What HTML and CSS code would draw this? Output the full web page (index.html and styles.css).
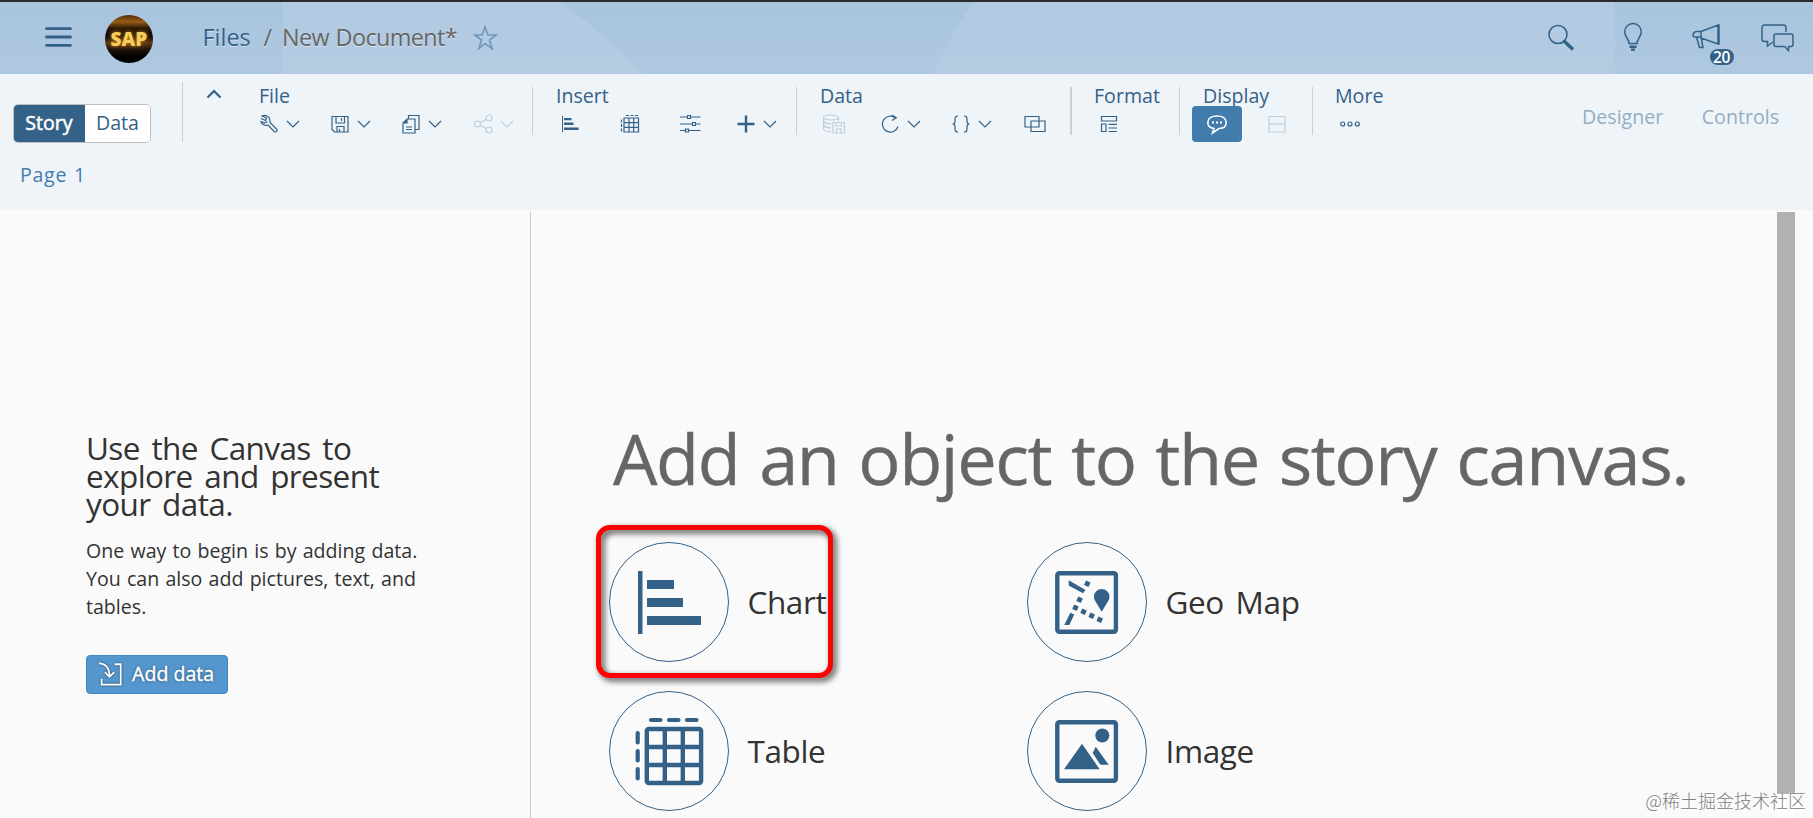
FILE: index.html
```html
<!DOCTYPE html>
<html lang="en">
<head>
    <meta charset="UTF-8">
    <meta name="viewport" content="width=device-width, initial-scale=1.0">
    <title>New Document</title>
    <link rel="stylesheet" href="styles.css">
</head>
<body>
    <svg class="symbols" width="0" height="0">
        <symbol id="chevron" viewBox="0 0 24 24"><path d="M6 9l6 6 6-6"/></symbol>
    </svg>

    <!-- Shell header -->
    <header class="shell">
        <svg class="shell-bg" viewBox="0 0 1813 72" preserveAspectRatio="none">
            <path d="M283 0H561Q606 34 644 72H283z"/>
            <path d="M974 0H1615V72H933Q949 34 974 0z"/>
        </svg>
        <svg class="menu-icon" viewBox="0 0 28 22">
            <path d="M2 2.7h24M2 11h24M2 19.3h24"/>
        </svg>
        <div class="avatar"><span>SAP</span></div>
        <nav class="breadcrumb">
            <a class="crumb-link">Files</a>
            <span class="crumb-slash">/</span>
            <span class="crumb-current">New Document*</span>
        </nav>
        <svg class="star-icon" viewBox="0 0 26 26">
            <path d="M13 2l2.9 8h8.2l-6.6 5 2.6 8.6L13 18.5l-6.1 5.1L9.5 15l-6.6-5h7.2z"/>
        </svg>
        <div class="shell-actions">
            <svg class="shell-icon" viewBox="0 0 32 32">
                <circle cx="13" cy="13.5" r="9"/>
                <path d="M19.5 20.5l7.5 7" class="thick"/>
            </svg>
            <svg class="shell-icon" viewBox="0 0 32 32">
                <path d="M12 22.5c0-5-4.3-6.5-4.3-11.7a8.3 8.3 0 0 1 16.6 0c0 5.2-4.3 6.7-4.3 11.700z"/>
                <path d="M12.5 25.7h7M14 28.6h4" class="bold"/>
            </svg>
            <div class="announce">
                <svg class="shell-icon" viewBox="0 0 32 32">
                    <path d="M12 10.5L29 4v19L12 17M29 4h1v19h-1M12 10.5H7.5a4 4 0 0 0-3.5 3.5c0 1 .8 2 2 2H12zM12 10.5V16l2 10.5h-3.500L7.5 16"/>
                </svg>
                <span class="badge">20</span>
            </div>
            <svg class="shell-icon chat" viewBox="0 0 36 32">
                <path d="M14 21l-5.5 4v-4.5H5.5a2.5 2.5 0 0 1-2.5-2.5V6.500A2.5 2.5 0 0 1 5.5 4h19A2.5 2.5 0 0 1 27 6.5V11"/>
                <path d="M17 13h15a2 2 0 0 1 2 2v8.5a2 2 0 0 1-2 2h-2.5V29.5L25.5 25.5H17a2 2 0 0 1-2-2V15a2 2 0 0 1 2-2z"/>
            </svg>
        </div>
    </header>

    <!-- Toolbar -->
    <section class="toolbar">
        <div class="toolbar-row">
            <div class="mode">
                <div class="segment">
                    <button class="segment-btn active">Story</button>
                    <button class="segment-btn">Data</button>
                </div>
            </div>
            <div class="sep tall"></div>
            <div class="collapse">
                <svg viewBox="0 0 16 10"><path d="M1.5 8.5L8 2l6.5 6.5"/></svg>
            </div>

            <div class="group group-file">
                <h3>File</h3>
                <div class="tools">
                    <div class="tool split">
                        <svg class="icon" viewBox="0 0 24 24"><path d="M4 6.5L8.5 8.5 9.5 6 5 4C9 2.5 13 4.5 13 8.5V10.5L20 17.5Q20.5 20 17.5 20L11 13C8 14 4.5 12.5 4 9.5L7.5 11 10.5 9.5"/></svg>
                        <svg class="icon"><use href="#chevron"/></svg>
                    </div>
                    <div class="tool split">
                        <svg class="icon" viewBox="0 0 24 24"><path d="M4 4.5H20V20H6.5L4 17.5zM8 4.5V11H16.5V4.5M9 20V14.5H16V20M11.5 17V20M13.5 6V9"/></svg>
                        <svg class="icon"><use href="#chevron"/></svg>
                    </div>
                    <div class="tool split">
                        <svg class="icon" viewBox="0 0 24 24"><path d="M8 7H16V21H4V11zM8 7V11H4M9.5 7V3.5H20V17.5H16M7 15h6M7 17.5h6"/><path class="fill" d="M8 7V11H4z"/></svg>
                        <svg class="icon"><use href="#chevron"/></svg>
                    </div>
                    <div class="tool split disabled">
                        <svg class="icon" viewBox="0 0 24 24"><circle cx="6.5" cy="12" r="3"/><circle cx="18" cy="6" r="3"/><circle cx="18" cy="18" r="3"/><path d="M9.3 10.6L15.2 7.5M9.3 13.4L15.2 16.5"/></svg>
                        <svg class="icon"><use href="#chevron"/></svg>
                    </div>
                </div>
            </div>
            <div class="sep"></div>

            <div class="group group-insert">
                <h3>Insert</h3>
                <div class="tools">
                    <div class="tool">
                        <svg class="icon" viewBox="0 0 24 24"><path class="fill" d="M4 4h1v16H4zM6 6h7.5v2.2H6zM6 10.5h9.5v2.5H6zM6 15.5h14.5v2.5H6z"/></svg>
                    </div>
                    <div class="tool">
                        <svg class="icon" viewBox="0 0 24 24"><path d="M6 6H20.5V20H6zM11 6V20M15.7 6V20M6 10.7H20.5M6 15.3H20.5M8 3.5h3M12.5 3.5h3M17 3.5h3M3.5 7.5v3M3.5 12v3M3.5 16.5v3"/></svg>
                    </div>
                    <div class="tool narrow">
                        <svg class="icon" viewBox="0 0 24 24"><path d="M2 5h7M13 5h9.5M2 12h12M18 12h4.5M2 18.5h5M11 18.5h11.5M9.5 3.5h3v3h-3zM14.5 10.5h3v3h-3zM7.5 17h3v3h-3z"/></svg>
                    </div>
                    <div class="tool split">
                        <svg class="icon" viewBox="0 0 24 24"><path d="M12 3.500v17M3.5 12h17" class="bold"/></svg>
                        <svg class="icon"><use href="#chevron"/></svg>
                    </div>
                </div>
            </div>
            <div class="sep"></div>

            <div class="group group-data">
                <h3>Data</h3>
                <div class="tools">
                    <div class="tool narrow disabled">
                        <svg class="icon" viewBox="0 0 24 24"><ellipse cx="9" cy="5.5" rx="7.5" ry="2.5"/><path d="M1.5 5.5V17.5Q3 20 9 20M16.5 5.5V9M1.5 9.5Q4 12 9 12M1.5 13.5Q4 16 9 16M11 10.5H22.5V21H11zM14 10.5V14H19.5V10.5M14.5 21V17H19V21"/></svg>
                    </div>
                    <div class="tool split">
                        <svg class="icon" viewBox="0 0 24 24"><path d="M20 14.5A8 8 0 1 1 17.5 6M14 3l4.3 2.8-4.3 2.7"/></svg>
                        <svg class="icon"><use href="#chevron"/></svg>
                    </div>
                    <div class="tool split wide">
                        <svg class="icon" viewBox="0 0 24 24"><path d="M9 4Q6 4 6 6.5V9.5Q6 12 3.5 12 6 12 6 14.5V17.5Q6 20 9 20M15 4Q18 4 18 6.5V9.5Q18 12 20.5 12 18 12 18 14.5V17.5Q18 20 15 20"/></svg>
                        <svg class="icon"><use href="#chevron"/></svg>
                    </div>
                    <div class="tool">
                        <svg class="icon wide" viewBox="0 0 24 24"><path d="M2 4.5H16V15H2zM8 9H22V19.500H8z"/></svg>
                    </div>
                </div>
            </div>
            <div class="sep double"></div>

            <div class="group group-format">
                <h3>Format</h3>
                <div class="tools">
                    <div class="tool">
                        <svg class="icon" viewBox="0 0 24 24"><path d="M4.5 4.5H19.5V9H4.5zM4.5 12H9V19.5H4.5zM11.5 12.3h8.5M11.5 16h8.5M11.5 19.5h8.5"/></svg>
                    </div>
                </div>
            </div>
            <div class="sep"></div>

            <div class="group group-display">
                <h3>Display</h3>
                <div class="tools">
                    <button class="tool-toggle">
                        <svg class="icon" viewBox="0 0 24 24"><path d="M9 16.5C5 16 2.8 13.5 2.8 10.5 2.8 6.5 6.5 4 12 4s9.2 2.5 9.2 6.5-3.2 6-7.2 6L7.5 21z"/><path d="M7 10.5h2M11 10.5h2M15 10.5h2" class="bold"/></svg>
                    </button>
                    <div class="tool disabled">
                        <svg class="icon" viewBox="0 0 24 24"><path d="M4 4.5H20V20H4zM4 12.2H20"/></svg>
                    </div>
                </div>
            </div>
            <div class="sep"></div>

            <div class="group group-more">
                <h3>More</h3>
                <div class="tools">
                    <div class="tool">
                        <svg class="icon" viewBox="0 0 24 24"><circle cx="4.7" cy="12" r="2"/><circle cx="12" cy="12" r="2"/><circle cx="19.3" cy="12" r="2"/></svg>
                    </div>
                </div>
            </div>

            <div class="panels">
                <span>Designer</span>
                <span>Controls</span>
            </div>
        </div>
        <div class="tabs"><a class="tab">Page 1</a></div>
    </section>

    <!-- Workspace -->
    <main class="workspace">
        <aside class="intro">
            <h2>Use the Canvas to explore and present your data.</h2>
            <p>One way to begin is by adding data. You can also add pictures, text, and tables.</p>
            <button class="add-data">
                <svg viewBox="0 0 28 28"><path d="M19 3.5h6.5v22H5V19M2 2.5Q13.5 3 13.5 17M8.5 12l5 5 5-5"/></svg>
                <span>Add data</span>
            </button>
        </aside>

        <section class="canvas">
            <h1>Add an object to the story canvas.</h1>
            <div class="objects">
                <div class="object highlighted">
                    <svg class="object-icon" viewBox="0 0 120 120">
                        <circle class="ring" cx="60" cy="60" r="59.5"/>
                        <path d="M29 29h4.5v63H29zM38 38h27v9H38zM38 56h36v9H38zM38 74h54v9H38z"/>
                    </svg>
                    <span>Chart</span>
                </div>
                <div class="object">
                    <svg class="object-icon" viewBox="0 0 120 120">
                        <circle class="ring" cx="60" cy="60" r="59.5"/>
                        <rect class="line" x="30.3" y="31.2" width="58.6" height="58.6" rx="2"/>
                        <path d="M41.7 38.3L58.5 48 56 51.3 41.7 43.5zM59 38.5l4.5 2-2 4.500-4.500-2zM51.3 54.5l4.5 2-2 4.500-4.500-2zM47.2 62.5l4.5 2-2 4.500-4.500-2zM55.3 66.5l4.5 2-2 4.500-4.500-2zM63.4 70.5l4.5 2-2 4.500-4.500-2zM71.5 74.5l4.5 2-2 4.500-4.500-2zM43.3 70.7L47.2 72.5 42.3 83H37.3z"/>
                        <path d="M74.7 69.7L68.5 59.5Q66.9 57 66.9 54.7a7.8 7.8 0 0 1 15.6 0Q82.5 57 80.9 59.5z"/>
                    </svg>
                    <span>Geo Map</span>
                </div>
                <div class="object">
                    <svg class="object-icon" viewBox="0 0 120 120">
                        <circle class="ring" cx="60" cy="60" r="59.5"/>
                        <rect class="line" x="37.8" y="38" width="54.3" height="54" rx="2"/>
                        <path class="line" d="M55.8 38V92M73.8 38V92M37.8 56H92M37.8 74H92"/>
                        <path class="line round" d="M42 29h9.5M60 29h9.5M78 29h9.5M28.7 42v9.5M28.7 60v9.5M28.7 78v9.5"/>
                    </svg>
                    <span>Table</span>
                </div>
                <div class="object">
                    <svg class="object-icon" viewBox="0 0 120 120">
                        <circle class="ring" cx="60" cy="60" r="59.5"/>
                        <rect class="line" x="30.3" y="31.2" width="58.6" height="58.6" rx="2"/>
                        <circle cx="75.3" cy="44.5" r="7"/>
                        <path d="M55 52.8L72.7 78.3H37zM68.7 55.8L81.7 73.8H73.3L65.7 62z"/>
                    </svg>
                    <span>Image</span>
                </div>
            </div>
        </section>

        <div class="scroll-track"><div class="scroll-thumb"></div></div>
    </main>

    <div class="watermark">@稀土掘金技术社区</div>
</body>
</html>
```
FILE: styles.css
```css
:root {
    --blue-dark: #346187;
    --blue: #427cac;
    --toolbar-bg: #eff4f9;
    --sep: #c8d0d8;
    --text: #333333;
}

*,
*::after {
    margin: 0;
    padding: 0;
    box-sizing: border-box;
}

body {
    width: 100%;
    height: 818px;
    overflow: hidden;
    position: relative;
    background-color: #fafafa;
    font-family: "Open Sans", "Noto Sans", sans-serif;
    font-size: 19.6px;
    line-height: 24px;
    color: var(--text);
}

h1, h2, h3 {
    font-weight: 400;
}

button {
    font: inherit;
    border: none;
}

svg {
    flex: none;
    fill: none;
    stroke: var(--blue-dark);
}

.symbols {
    position: absolute;
}

/* Shell header */
.shell {
    position: relative;
    display: flex;
    align-items: center;
    height: 74px;
    padding-left: 44px;
    padding-right: 18px;
    padding-bottom: 3px;
    border-top: 2px solid #2b2a2c;
    background: linear-gradient(#a9c5de, #aec8e0);
}

.shell-bg {
    position: absolute;
    inset: 0;
    width: 100%;
    height: 100%;
    fill: rgba(196, 214, 232, 0.28);
    stroke: none;
}

.shell > *:not(.shell-bg) {
    position: relative;
}

.menu-icon {
    width: 29px;
    height: 22px;
    stroke-width: 2.8;
    stroke-linecap: round;
}

.avatar {
    display: flex;
    align-items: center;
    justify-content: center;
    width: 48px;
    height: 48px;
    margin-left: 32px;
    top: 2px;
    border-radius: 50%;
    background: linear-gradient(#4d2c0a, #9a5c14 14%, #2a1706 28%, #100b06 45%, #5e3a12 58%, #1c1208 72%, #000 88%);
    color: #f2cc5c;
    font-size: 19px;
    font-weight: 800;
    text-shadow: 0 0 4px #d07e18;
}

.breadcrumb {
    display: flex;
    margin-left: 49.5px;
    font-size: 23.4px;
    line-height: 30px;
    color: #666666;
    text-shadow: 0 1px 0 rgba(255, 255, 255, 0.5);
}

.crumb-link {
    width: 61px;
    color: var(--blue-dark);
}

.crumb-slash {
    width: 18.5px;
}

.crumb-current {
    letter-spacing: -0.6px;
    word-spacing: 1px;
}

.star-icon {
    width: 26px;
    height: 26px;
    margin-left: 14.5px;
    top: 1px;
    stroke: #7197ba;
    stroke-width: 1.6;
}

.shell-actions {
    display: flex;
    align-items: center;
    gap: 40px;
    margin-left: auto;
}

.shell-icon {
    display: block;
    width: 32px;
    height: 32px;
    stroke-width: 1.5;
}

.shell-icon.chat {
    width: 36px;
    margin-left: -1.5px;
}

.bold {
    stroke-width: 2.4;
}

.thick {
    stroke-width: 3.4;
    stroke-linecap: round;
}

.announce {
    position: relative;
}

.badge {
    position: absolute;
    left: 21px;
    top: 28px;
    width: 24px;
    height: 16px;
    border-radius: 8px;
    background-color: var(--blue-dark);
    color: #fff;
    font-size: 15.5px;
    font-weight: 600;
    line-height: 16px;
    letter-spacing: -0.3px;
    text-align: center;
}

/* Toolbar */
.toolbar {
    height: 136px;
    background-color: var(--toolbar-bg);
    color: var(--blue-dark);
}

.toolbar-row {
    display: flex;
    align-items: flex-start;
    height: 88px;
}

.mode {
    width: 182px;
    padding: 30px 0 0 13px;
}

.segment {
    display: flex;
    width: 138px;
    height: 39px;
    border: 1px solid #bfbfbf;
    border-radius: 5px;
    background-color: #fff;
    overflow: hidden;
}

.segment-btn {
    width: 65px;
    padding-bottom: 1px;
    background-color: #fff;
    color: var(--blue-dark);
}

.segment-btn.active {
    width: 72px;
    margin: -1px 0 -1px -1px;
    background-color: var(--blue-dark);
    color: #fff;
    -webkit-text-stroke: 0.5px #fff;
}

.sep {
    width: 1px;
    height: 48px;
    margin-top: 13px;
    background-color: var(--sep);
}

.sep.tall {
    height: 60px;
    margin-top: 8px;
}

.sep.double {
    width: 2px;
}

.collapse {
    width: 75px;
    padding: 15px 0 0 23px;
}

.collapse svg {
    display: block;
    width: 16px;
    height: 10px;
    stroke-width: 2.2;
}

.group {
    padding: 10px 0 0 22px;
}

.group-file {
    width: 274px;
    padding-left: 0;
}

.group-insert {
    width: 263px;
}

.group-data {
    width: 273px;
}

.group-format {
    width: 107px;
}

.group-display {
    width: 132px;
}

.group h3 {
    padding-left: 1px;
    font-size: 19.6px;
    line-height: 24px;
}

.group-format h3,
.group-more h3 {
    padding-left: 0;
}

.tools {
    display: flex;
    align-items: center;
    height: 32px;
    margin-left: 3px;
}

.group-file .tools {
    margin-left: -1px;
}

.group-display .tools {
    margin-left: -10px;
}

.tool {
    display: flex;
    flex: none;
    width: 60px;
}

.tool.narrow {
    width: 55.5px;
}

.tool.split {
    width: 71.2px;
}

.tool.split.wide {
    width: 74.5px;
}

.tool.disabled {
    opacity: 0.25;
}

.icon {
    width: 24px;
    height: 24px;
    stroke-width: 1.2;
}

.fill {
    fill: var(--blue-dark);
    stroke: none;
}

.tool-toggle {
    display: flex;
    align-items: center;
    justify-content: center;
    flex: none;
    position: relative;
    width: 50px;
    height: 36px;
    margin-right: 23px;
    border-radius: 4px;
    background-color: var(--blue);
}

.tool-toggle .icon {
    stroke: #fff;
    stroke-width: 1.6;
}

.tool-toggle .bold {
    stroke-width: 2;
}

.panels {
    display: flex;
    gap: 38.5px;
    margin: 30.5px 34px 0 auto;
    color: #94adc4;
}

.tabs {
    padding: 1px 0 0 20px;
}

.tab {
    color: var(--blue);
    letter-spacing: 0.7px;
    word-spacing: 1px;
}

/* Workspace */
.workspace {
    display: flex;
    height: 608px;
    padding-top: 2px;
}

.intro {
    width: 531px;
    padding: 222px 100px 0 86px;
    border-right: 1px solid #cccccc;
}

.intro h2 {
    width: 300px;
    font-size: 31.5px;
    line-height: 28px;
    letter-spacing: -0.6px;
    word-spacing: 4px;
}

.intro p {
    width: 345px;
    margin-top: 18.5px;
    line-height: 28px;
    word-spacing: 1.1px;
}

.add-data {
    display: flex;
    align-items: center;
    width: 142px;
    height: 39px;
    margin-top: 34.5px;
    padding-left: 10px;
    padding-bottom: 1px;
    border: 1px solid #3f89c9;
    border-radius: 4px;
    background-color: #5496cd;
    color: #fff;
    text-shadow: 0 0 3px rgba(0, 0, 0, 0.6);
    -webkit-text-stroke: 0.4px #fff;
}

.add-data svg {
    width: 26px;
    height: 26px;
    margin-right: 9px;
    stroke: #fff;
    stroke-width: 1.9;
    filter: drop-shadow(0 0 1px rgba(0, 0, 0, 0.6));
}

.canvas {
    width: 1246px;
    padding: 206px 0 0 78px;
}

.canvas h1 {
    margin-left: 4px;
    font-size: 70.4px;
    line-height: 80px;
    letter-spacing: -1.45px;
    word-spacing: 3px;
    color: #666666;
    white-space: nowrap;
    -webkit-text-stroke: 0.4px #666666;
}

.objects {
    display: grid;
    grid-template-columns: 418px 418px;
    gap: 29px 0;
    margin-top: 44px;
}

.object {
    display: flex;
    align-items: center;
    position: relative;
    height: 120px;
}

.object span {
    margin-left: 18.5px;
    font-size: 31.5px;
    line-height: 40px;
    letter-spacing: -0.4px;
    word-spacing: 4px;
}

.object-icon {
    width: 120px;
    height: 120px;
    fill: var(--blue-dark);
    stroke: none;
}

.object-icon .ring {
    fill: none;
    stroke: var(--blue-dark);
    stroke-width: 1;
}

.object-icon .line {
    fill: none;
    stroke: var(--blue-dark);
    stroke-width: 4.4;
}

.object-icon .round {
    stroke-linecap: round;
    stroke-width: 4.2;
}

/* Marker frame around the chart entry */
.highlighted::after {
    content: "";
    position: absolute;
    left: -13px;
    top: -17px;
    width: 237px;
    height: 153px;
    border: 5px solid #ff0000;
    border-radius: 14px;
    filter: drop-shadow(3px 3px 3px rgba(0, 0, 0, 0.75));
}

.scroll-track {
    width: 18px;
    background-color: #fff;
}

.scroll-thumb {
    height: 582px;
    background-color: #b1b1b1;
}

.watermark {
    position: absolute;
    right: 7px;
    bottom: 6px;
    font-family: "Noto Sans CJK SC", sans-serif;
    font-size: 18px;
    font-weight: 300;
    line-height: 24px;
    color: #808080;
    text-shadow: 0 0 2px #fff;
}
```
